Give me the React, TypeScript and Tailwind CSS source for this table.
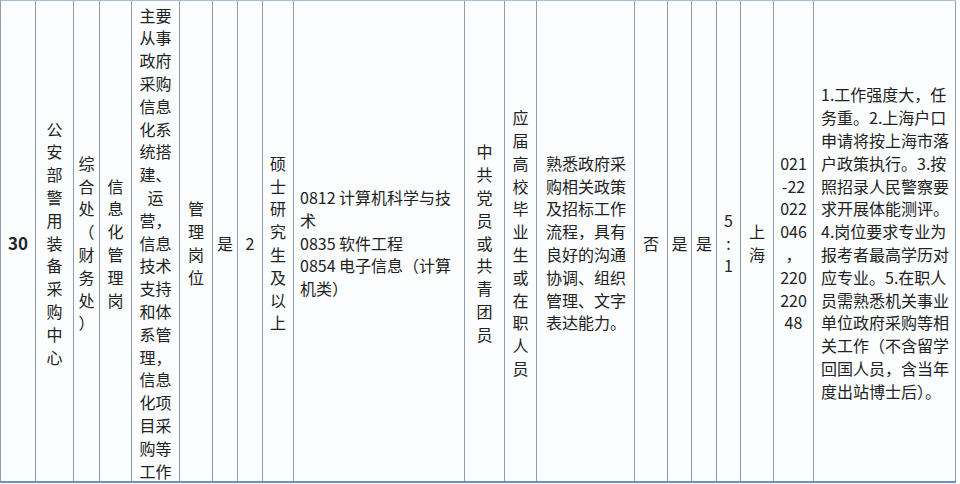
import React from "react";

type Col = {
  w: string;
  lines: string[];
  align?: "center" | "left";
  pad?: string;
  bold?: boolean;
};

const cols: Col[] = [
  { w: "w-[35px]", lines: ["30"], bold: true },
  { w: "w-[38px]", lines: "公安部警用装备采购中心".split("") },
  { w: "w-[26px]", lines: ["综", "合", "处", "（", "财", "务", "处", "）"] },
  { w: "w-[32px]", lines: "信息化管理岗".split("") },
  {
    w: "w-[48px]",
    lines: [
      "主要", "从事", "政府", "采购", "信息", "化系", "统搭", "建、", "运", "营，",
      "信息", "技术", "支持", "和体", "系管", "理，", "信息", "化项", "目采", "购等", "工作",
    ],
  },
  { w: "w-[33px]", lines: "管理岗位".split("") },
  { w: "w-[25px]", lines: ["是"] },
  { w: "w-[25px]", lines: ["2"] },
  { w: "w-[31px]", lines: "硕士研究生及以上".split("") },
  {
    w: "w-[171px]",
    align: "left",
    pad: "pl-[6px]",
    lines: ["0812 计算机科学与技", "术", "0835 软件工程", "0854 电子信息（计算", "机类）"],
  },
  { w: "w-[40px]", lines: "中共党员或共青团员".split("") },
  { w: "w-[32px]", lines: "应届高校毕业生或在职人员".split("") },
  {
    w: "w-[98px]",
    align: "left",
    pad: "pl-[9px]",
    lines: ["熟悉政府采", "购相关政策", "及招标工作", "流程，具有", "良好的沟通", "协调、组织", "管理、文字", "表达能力。"],
  },
  { w: "w-[33px]", lines: ["否"] },
  { w: "w-[24px]", lines: ["是"] },
  { w: "w-[25px]", lines: ["是"] },
  { w: "w-[24px]", lines: ["5", ":", "1"] },
  { w: "w-[33px]", lines: ["上", "海"] },
  { w: "w-[40px]", lines: ["021", "-22", "022", "046", "，", "220", "220", "48"] },
  {
    w: "w-[142px]",
    align: "left",
    pad: "pl-[7px]",
    lines: [
      "1.工作强度大，任",
      "务重。2.上海户口",
      "申请将按上海市落",
      "户政策执行。3.按",
      "照招录人民警察要",
      "求开展体能测评。",
      "4.岗位要求专业为",
      "报考者最高学历对",
      "应专业。5.在职人",
      "员需熟悉机关事业",
      "单位政府采购等相",
      "关工作（不含留学",
      "回国人员，含当年",
      "度出站博士后）。",
    ],
  },
];

function Cell({ col }: { col: Col }) {
  const left = col.align === "left";
  return (
    <div
      className={`${col.w} shrink-0 h-full border-r border-[#8e9db2] pt-[4px] flex flex-col justify-center overflow-visible ${
        left ? `items-start ${col.pad}` : "items-center"
      }`}
    >
      <div
        className={`${left ? "text-left" : "text-center"} ${
          col.bold ? "font-bold text-[17px]" : "text-[16px]"
        } leading-[22.8px] whitespace-nowrap text-[#222]`}
      >
        {col.lines.map((l, i) => (
          <div key={i}>{l}</div>
        ))}
      </div>
    </div>
  );
}

export default function App() {
  return (
    <div
      className="w-[960px] h-[484px] bg-white overflow-hidden"
      style={{ fontFamily: '"Noto Sans CJK SC", "Noto Sans", sans-serif' }}
    >
      <div className="w-[956px] h-[483px] flex bg-[#fcfdff] border-l border-t border-b-2 border-l-[#8e9db2] border-t-[#a9bcd6] border-b-[#7391bd]">
        {cols.map((c, i) => (
          <Cell key={i} col={c} />
        ))}
      </div>
    </div>
  );
}
